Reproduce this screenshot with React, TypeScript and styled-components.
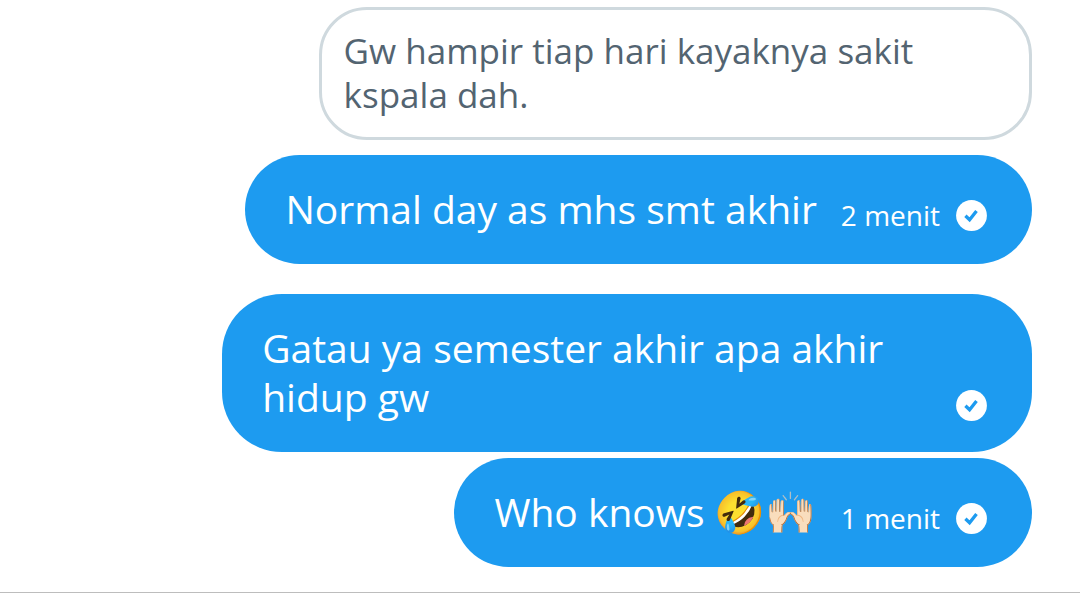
import React from "react";
import type { ReactNode } from "react";
import styled, { createGlobalStyle } from "styled-components";

const GlobalStyle = createGlobalStyle`
  * { box-sizing: border-box; }
  body {
    margin: 0;
    background: #fff;
    font-family: "Open Sans", "Noto Sans", "Noto Color Emoji", sans-serif;
  }
`;

const Conversation = styled.main`
  display: flex;
  flex-direction: column;
  align-items: flex-end;
  padding: 7px 48px 25px;
  border-bottom: 1px solid #bdbdbd;
`;

const QuotedMessage = styled.blockquote`
  width: 72.5%;
  margin: 0;
  padding: 19px 22px 20px;
  border: 3px solid #cfd9de;
  border-radius: 48px;
  color: #536471;
  font-size: 35px;
  line-height: 44px;
`;

const Bubble = styled.article<{ $gap: number; $wide?: boolean }>`
  display: flex;
  align-items: flex-end;
  justify-content: space-between;
  gap: 24px;
  width: ${(p) => (p.$wide ? "82.3%" : "auto")};
  margin-top: ${(p) => p.$gap}px;
  padding: 29px 45px 31px 40px;
  border-radius: 60px;
  background: #1d9bf0;
  color: #fff;
`;

const MessageText = styled.p`
  margin: 0;
  font-size: 39px;
  line-height: 49px;
`;

const Emoji = styled.span`
  font-size: 41px;
  line-height: 1;
`;

const Meta = styled.footer`
  display: flex;
  flex-shrink: 0;
  align-items: center;
  gap: 16px;
  font-size: 28px;
  line-height: 36px;
`;

const StatusIcon = styled.svg`
  display: block;
  width: 31px;
  height: 31px;
`;

function Sent() {
  return (
    <StatusIcon viewBox="0 0 31 31" role="img" aria-label="Terkirim">
      <circle cx="15.5" cy="15.5" r="15.4" fill="#fff" />
      <path d="M9.4 15.8 L13.6 19.8 L20.5 11" fill="none" stroke="#1d9bf0" strokeWidth="3.3" />
    </StatusIcon>
  );
}

interface MessageProps {
  children: ReactNode;
  time?: string;
  gap: number;
  wide?: boolean;
}

function Message({ children, time, gap, wide }: MessageProps) {
  return (
    <Bubble $gap={gap} $wide={wide}>
      <MessageText>{children}</MessageText>
      <Meta>
        {time && <time>{time}</time>}
        <Sent />
      </Meta>
    </Bubble>
  );
}

export default function App() {
  return (
    <>
      <GlobalStyle />
      <Conversation>
        <QuotedMessage>Gw hampir tiap hari kayaknya sakit kspala dah.</QuotedMessage>
        <Message time="2 menit" gap={15}>Normal day as mhs smt akhir</Message>
        <Message gap={30} wide>Gatau ya semester akhir apa akhir hidup gw</Message>
        <Message time="1 menit" gap={6}>
          Who knows <Emoji>🤣🙌🏻</Emoji>
        </Message>
      </Conversation>
    </>
  );
}
